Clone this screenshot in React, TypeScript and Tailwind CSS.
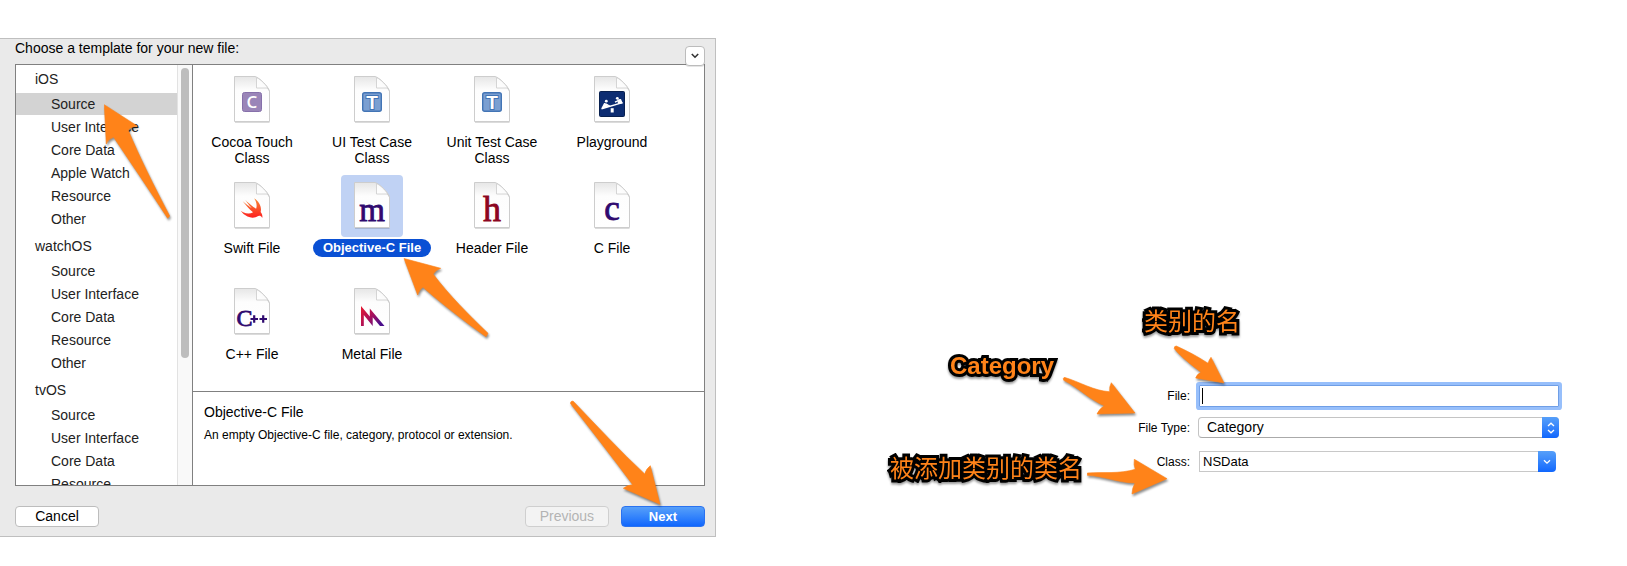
import { useId, type ReactNode } from 'react'

type Group = { name: string; items: string[] }

const groups: Group[] = [
  { name: 'iOS', items: ['Source', 'User Interface', 'Core Data', 'Apple Watch', 'Resource', 'Other'] },
  { name: 'watchOS', items: ['Source', 'User Interface', 'Core Data', 'Resource', 'Other'] },
  { name: 'tvOS', items: ['Source', 'User Interface', 'Core Data', 'Resource'] },
]

function DocIcon({ children }: { children: ReactNode }) {
  const id = useId()
  return (
    <svg viewBox="0 0 36 46" className="h-[46px] w-9 overflow-visible" aria-hidden="true">
      <defs>
        <linearGradient id={id + 'p'} x1="0" y1="0" x2="0" y2="1">
          <stop offset="0" stopColor="#e6e6e6" />
          <stop offset="0.3" stopColor="#fdfdfd" />
          <stop offset="1" stopColor="#ffffff" />
        </linearGradient>
        <linearGradient id={id + 'f'} x1="0" y1="1" x2="1" y2="0">
          <stop offset="0" stopColor="#ffffff" />
          <stop offset="0.7" stopColor="#fafafa" />
          <stop offset="1" stopColor="#dcdcdc" />
        </linearGradient>
      </defs>
      <path d="M1 46.3h34.5" stroke="#000" strokeOpacity=".18" />
      <path d="M.5 .5H21C25 1.500 34 10 35.500 15V45.500H.5Z" fill={'url(#' + id + 'p)'} stroke="#cdcdcd" />
      <path d="M22.500 1.500V12H33.500L35 14.500C33 9.500 27 3.500 22.500 1.500Z" fill={'url(#' + id + 'f)'} stroke="#cccccc" strokeWidth=".8" />
      {children}
    </svg>
  )
}

function Letter({ x, y, size, color, children }: { x: number; y: number; size: number; color: string; children: string }) {
  return (
    <text x={x} y={y} fontSize={size} fill={color} stroke={color} strokeWidth=".8" textAnchor="middle" fontFamily="'Liberation Serif', serif">
      {children}
    </text>
  )
}

function TestGlyph() {
  return (
    <>
      <rect x="8.700" y="16.700" width="18.600" height="18.600" rx="2" fill="#7b9fd1" stroke="#4274b5" strokeWidth="1.400" />
      <text x="18" y="32.500" fontSize="19" fontWeight="700" fill="#fff" stroke="#4274b5" strokeWidth="2" paintOrder="stroke" textAnchor="middle" fontFamily="'Liberation Sans', sans-serif">T</text>
    </>
  )
}

const templates: { name: string; glyph: ReactNode }[] = [
  {
    name: 'Cocoa Touch Class',
    glyph: (
      <>
        <rect x="8.500" y="16.500" width="19" height="19" rx="2" fill="#9a85b8" stroke="#8670aa" />
        <text x="18" y="32.200" fontSize="17" fontWeight="600" fill="#fff" textAnchor="middle" fontFamily="'Open Sans', sans-serif">C</text>
      </>
    ),
  },
  { name: 'UI Test Case Class', glyph: <TestGlyph /> },
  { name: 'Unit Test Case Class', glyph: <TestGlyph /> },
  {
    name: 'Playground',
    glyph: (
      <>
        <rect x="5.500" y="15.500" width="25" height="25" rx="1" fill="#0d2d72" stroke="#08204f" />
        <g fill="#fff" stroke="#fff" strokeLinejoin="round">
          <path d="M7.500 32.800L28.500 26.600" strokeWidth="1.500" fill="none" />
          <path d="M16.700 32.200h3v4.300h-3z" stroke="none" />
          <path d="M8.200 32L10.500 27.500L12.800 28.500L13.500 30.500L9 32Z" strokeWidth="1.200" />
          <path d="M12 28L16 30.200" strokeWidth="1.300" />
          <circle cx="12.300" cy="25.200" r="1.400" stroke="none" />
          <path d="M28 27L26.500 23.500L24 24L24.500 27.500Z" strokeWidth="1.200" />
          <path d="M24.500 24.500L21 26.200" strokeWidth="1.300" />
          <circle cx="23.300" cy="22.300" r="1.400" stroke="none" />
        </g>
      </>
    ),
  },
  {
    name: 'Swift File',
    glyph: (
      <>
        <defs>
          <linearGradient id="swift" x1="0" y1="0" x2="0" y2="1">
            <stop offset="0" stopColor="#f88a36" />
            <stop offset="1" stopColor="#fd2020" />
          </linearGradient>
        </defs>
        <path
          transform="translate(3.800 12.200) scale(1.200)"
          fill="url(#swift)"
          d="M13.543 3.410c4.114 2.470 6.545 7.162 5.549 11.131-.024.093-.05.181-.076.272l.002.001c2.062 2.538 1.500 5.258 1.236 4.745-1.072-2.086-3.066-1.568-4.088-1.043a6.803 6.803 0 0 1-.281.158l-.02.012-.002.002c-2.115 1.123-4.957 1.205-7.812-.022a12.568 12.568 0 0 1-5.640-4.838c.649.480 1.350.902 2.097 1.252 3.019 1.414 6.051 1.311 8.197-.002C9.651 12.730 7.101 9.670 5.146 7.191a10.628 10.628 0 0 1-1.005-1.384c2.340 2.142 6.038 4.830 7.365 5.576C8.690 8.408 6.208 4.743 6.324 4.860c4.436 4.466 8.527 6.996 8.527 6.996.154.085.270.154.360.213.085-.215.160-.437.224-.668.708-2.588-.090-5.548-1.893-7.992z"
        />
      </>
    ),
  },
  { name: 'Objective-C File', glyph: <Letter x={18} y={38.700} size={33} color="#2f0a6f">m</Letter> },
  { name: 'Header File', glyph: <Letter x={18} y={38.700} size={36} color="#8c0622">h</Letter> },
  { name: 'C File', glyph: <Letter x={18} y={38} size={35} color="#2f0a6f">c</Letter> },
  {
    name: 'C++ File',
    glyph: (
      <>
        <Letter x={10.500} y={38.300} size={24} color="#2f0a6f">C</Letter>
        <path d="M16.500 31H24M20.200 27.200V34.800M25.500 31H33M29.200 27.200V34.800" stroke="#2f0a6f" strokeWidth="2.200" fill="none" />
      </>
    ),
  },
  {
    name: 'Metal File',
    glyph: (
      <>
        <defs>
          <linearGradient id="metal" x1="0" y1="0" x2="1" y2="0.600">
            <stop offset="0" stopColor="#e8192f" />
            <stop offset="0.550" stopColor="#a8105c" />
            <stop offset="1" stopColor="#4a0f8c" />
          </linearGradient>
        </defs>
        <path fill="url(#metal)" d="M7 18L15.800 28.500V20.500L30.500 38H26L18.700 29.200V38L9.800 27V38H7Z" />
      </>
    ),
  },
]

function Template({ name, glyph, selected }: { name: string; glyph: ReactNode; selected: boolean }) {
  return (
    <button type="button" aria-pressed={selected} className="flex h-[106px] flex-col items-center text-[14px] leading-4">
      <span className={selected ? 'flex size-[62px] items-center justify-center rounded bg-[#c0d2f4] pb-0.5' : 'flex size-[62px] items-center justify-center pb-0.5'}>
        <DocIcon>{glyph}</DocIcon>
      </span>
      <span className={selected ? 'mt-0.5 rounded-full bg-[#0a50d4] px-2.5 py-px text-[13px] font-bold whitespace-nowrap text-white' : 'mt-0.5 max-w-[104px] py-px'}>
        {name}
      </span>
    </button>
  )
}

function Arrow({ box, d, className }: { box: string; d: string; className: string }) {
  return (
    <svg viewBox={box} className={'pointer-events-none absolute z-10 overflow-visible drop-shadow-[1px_2px_1px_rgba(0,0,0,0.45)] ' + className} aria-hidden="true">
      <path d={d} fill="#ff8319" stroke="#ff8319" strokeLinejoin="round" strokeWidth=".6" />
    </svg>
  )
}

function Note({ className, children }: { className: string; children: ReactNode }) {
  return (
    <p className={"absolute z-10 leading-8 whitespace-nowrap text-[#ff8319] [paint-order:stroke] [-webkit-text-stroke:6px_#000] [stroke-linejoin:round] drop-shadow-[0_2px_1px_rgba(0,0,0,0.4)] font-['Liberation_Sans','Noto_Sans_CJK_SC',sans-serif] " + className}>
      {children}
    </p>
  )
}

function TemplateDialog() {
  return (
    <section className="relative mt-[38px] w-[44%] min-w-[640px] self-start border border-l-0 border-[#bfbfbf] bg-[#eaeaea] pr-2.5 pb-[9px] pl-[15px]">
      <h1 className="h-[25px] text-[14px] leading-[19px]">Choose a template for your new file:</h1>
      <button type="button" aria-label="Collapse" className="absolute top-[7px] right-2.5 z-10 flex size-5 items-center justify-center rounded border border-[#bcbcbc] bg-white shadow-[0_1px_0_rgba(0,0,0,0.1)]">
        <svg viewBox="0 0 8 6" className="h-1.5 w-2" fill="none" stroke="#333" strokeWidth="1.600" aria-hidden="true">
          <path d="M.8 1L4 4.200L7.200 1" />
        </svg>
      </button>
      <div className="flex h-[422px] border border-[#808080] bg-white">
        <nav className="flex w-44 shrink-0 overflow-hidden text-[14px] leading-[22px] text-[#222]">
          <div className="flex-1 pt-[3px]">
            {groups.map((group, g) => (
              <div key={group.name} className="mb-[5px]">
                <h2 className="mb-[3px] pl-[19px]">{group.name}</h2>
                <ul className="flex flex-col gap-px">
                  {group.items.map((item, i) => (
                    <li key={item}>
                      <button type="button" className={g === 0 && i === 0 ? 'block w-full bg-[#d3d3d3] pl-[35px] text-left' : 'block w-full pl-[35px] text-left'}>
                        {item}
                      </button>
                    </li>
                  ))}
                </ul>
              </div>
            ))}
          </div>
          <div className="w-[15px] border-l border-[#e2e2e2] bg-[#f9f9f9] pt-[3px] pl-[3px]">
            <div className="h-[290px] w-2 rounded-full bg-[#bdbdbd]" />
          </div>
        </nav>
        <div className="flex flex-1 flex-col border-l border-[#808080]">
          <div className="h-[327px] border-b border-[#808080] pt-1">
            <div className="-ml-px grid w-[480px] grid-cols-4">
              {templates.map((t) => (
                <Template key={t.name} name={t.name} glyph={t.glyph} selected={t.name === 'Objective-C File'} />
              ))}
            </div>
          </div>
          <div className="px-[11px] pt-2.5">
            <h2 className="text-[14px] leading-5">Objective-C File</h2>
            <p className="mt-1 text-[12px] leading-[18px]">An empty Objective-C file, category, protocol or extension.</p>
          </div>
        </div>
      </div>
      <div className="mt-5 flex gap-3 text-[14px] leading-[19px]">
        <button type="button" className="mr-auto w-[84px] rounded border border-[#bdbdbd] bg-white">Cancel</button>
        <button type="button" disabled className="w-[84px] rounded border border-[#cfcfcf] bg-[#f3f3f3] text-[#b3b3b3]">Previous</button>
        <button type="button" className="w-[84px] rounded border border-[#2a72f0] bg-linear-to-b from-[#569ff9] to-[#0f66fd] text-[13px] font-bold text-white">Next</button>
      </div>
      <Arrow
        className="top-[61px] left-[100px] h-[125px] w-[75px]"
        box="100 100 75 125"
        d="M104.300 104.700L137.300 126Q130 127 128.300 130.300C139 156 154 186 169.700 216L167.700 218.300C150 191 131 163 113.700 137.300Q108 139 106.300 144Z"
      />
      <Arrow
        className="top-[211px] left-[400px] h-[90px] w-[90px]"
        box="400 250 90 90"
        d="M404 258.500L440.700 268.300Q435 270.500 433.300 274.300C449 295 469 315 488 333.300L486 336.700C464 321 442 304 423 287.300Q419 290 417.700 295Z"
      />
      <Arrow
        className="right-[45px] bottom-[26px] h-[110px] w-[100px]"
        box="570 400 100 110"
        d="M660 504.300L650.300 465.700Q646 469 644.700 474C620 451 597 426 573 401Q570.500 401 570.300 403.300C591 430 613 458 632.700 484.700Q627 485 623.300 488.300Z"
      />
    </section>
  )
}

function NewFileForm() {
  return (
    <section className="relative flex-1 pt-[385px] pr-[68px]">
      <form className="grid grid-cols-[minmax(90px,1fr)_minmax(0,361px)] items-center gap-x-2 text-[12px]">
        <label htmlFor="file" className="text-right">File:</label>
        <div className="relative ml-px h-[22px]">
          <input id="file" type="text" className="block h-full w-full rounded-[1px] border border-[#6f9ee6] bg-white px-1 shadow-[0_0_0_3px_#97bffb] outline-none" />
          <span className="absolute top-[3px] left-[3px] h-4 w-px bg-black" />
        </div>
        <label htmlFor="type" className="mt-2.5 text-right">File Type:</label>
        <div className="relative mt-2.5 h-[21px]">
          <select id="type" className="block h-full w-full appearance-none rounded border border-[#c4c4c4] border-b-[#aaa] bg-white pl-2 text-[14px] leading-[19px]">
            <option>Category</option>
            <option>Extension</option>
            <option>Protocol</option>
          </select>
          <span className="pointer-events-none absolute inset-y-0 right-0 flex w-[17px] items-center justify-center rounded-r bg-linear-to-b from-[#569ff9] to-[#0f66fd]">
            <svg viewBox="0 0 8 12" className="h-3 w-2" fill="none" stroke="#fff" strokeWidth="1.300" aria-hidden="true">
              <path d="M1 4L4 1.200L7 4M1 8L4 10.800L7 8" />
            </svg>
          </span>
        </div>
        <label htmlFor="class" className="mt-[13px] text-right">Class:</label>
        <div className="mt-[13px] mr-[3px] ml-px flex h-[21px]">
          <input id="class" type="text" defaultValue="NSData" className="h-full min-w-0 flex-1 border border-r-0 border-[#c8c8c8] bg-white pl-[3px] text-[13px]" />
          <button type="button" aria-label="Show classes" className="flex w-[18px] items-center justify-center rounded-r bg-linear-to-b from-[#569ff9] to-[#0f66fd]">
            <svg viewBox="0 0 8 6" className="h-1.5 w-2" fill="none" stroke="#fff" strokeWidth="1.300" aria-hidden="true">
              <path d="M1 1.200L4 4.200L7 1.200" />
            </svg>
          </button>
        </div>
      </form>
      <Note className="top-[306px] right-[387px] text-[24px] font-normal">类别的名</Note>
      <Note className="top-[350px] right-[573px] text-[24px] font-bold">Category</Note>
      <Note className="top-[453px] right-[545px] text-[24px] font-normal">被添加类别的类名</Note>
      <Arrow
        className="top-[340px] right-[397px] h-[50px] w-[60px]"
        box="1170 340 60 50"
        d="M1176.300 346Q1174 346 1174.300 348.700C1182 358 1192 365 1201 372.300Q1197 374 1195.700 378L1224 383L1211 357.300Q1209 360 1208 363.300C1197 356 1187 351 1176.300 346Z"
      />
      <Arrow
        className="top-[370px] right-[487px] h-[50px] w-20"
        box="1060 370 80 50"
        d="M1064.300 377.300Q1062.500 378.500 1063.700 380.300C1079 388 1090 400 1104.300 405.700Q1099 409 1097 414L1135 413L1111.300 382.700Q1109 387 1109.700 391.700C1094 391 1080 382 1064.300 377.300Z"
      />
      <Arrow
        className="top-[455px] right-[457px] h-[45px] w-[90px]"
        box="1080 455 90 45"
        d="M1087.300 473V475.300C1103 476 1119 483 1135 483Q1132 488 1132 494L1167 478.700L1134.300 459.300Q1133.500 465 1135.300 469.300C1119 474 1103 472 1087.300 473Z"
      />
    </section>
  )
}

export default function App() {
  return (
    <main className="flex min-h-screen bg-white font-['Liberation_Sans','Noto_Sans_CJK_SC',sans-serif] text-black">
      <TemplateDialog />
      <NewFileForm />
    </main>
  )
}
